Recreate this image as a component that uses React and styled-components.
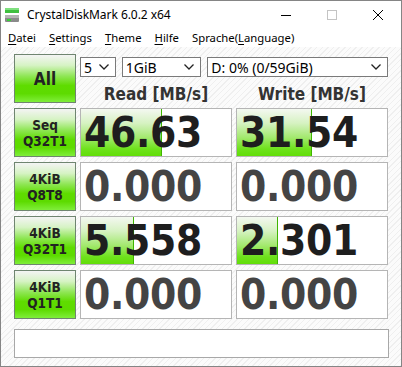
import React from 'react';
import styled, { createGlobalStyle } from 'styled-components';

const GlobalStyle = createGlobalStyle`
  html, body {
    margin: 0;
    padding: 0;
    background: #ffffff;
  }
`;

const Window = styled.div`
  box-sizing: border-box;
  width: 402px;
  height: 367px;
  border: 1px solid #858585;
  display: flex;
  flex-direction: column;
  background: #ffffff;
  font-family: 'Noto Sans', 'DejaVu Sans', sans-serif;
`;

const TitleBar = styled.div`
  height: 27px;
  display: flex;
  align-items: center;
  padding-left: 3px;
  background: #ffffff;
`;

const AppIcon = styled.svg`
  width: 16px;
  height: 16px;
  margin-right: 7px;
  flex-shrink: 0;
`;

const Title = styled.div`
  font-size: 12px;
  color: #000;
  flex: 1;
  letter-spacing: -0.05px;
`;

const WinButton = styled.div`
  width: 46px;
  height: 27px;
  display: flex;
  align-items: center;
  justify-content: center;
`;

const MenuBar = styled.div`
  height: 19px;
  display: flex;
  align-items: center;
  padding-left: 7px;
  gap: 13px;
  background: #ffffff;
  font-size: 11.3px;
  color: #000;
`;

const MenuItem = styled.span`
  u {
    text-decoration: underline;
    text-underline-offset: 2px;
  }
`;

const Client = styled.div`
  flex: 1;
  padding: 7px 12px 0 13px;
  background-color: #fbfbfb;
  background-image: repeating-linear-gradient(
    135deg,
    #fbfbfb 0px,
    #fbfbfb 3px,
    #efefef 3px,
    #efefef 4px
  );
`;

const Grid = styled.div`
  display: grid;
  grid-template-columns: 62px 152px 152px;
  grid-template-rows: 49px 49px 49px 49px 49px;
  column-gap: 4px;
  row-gap: 5px;
`;

const TestButton = styled.div`
  box-sizing: border-box;
  border: 1px solid #6f8570;
  background: linear-gradient(
    #f4f4f4 0%,
    #d6f3c4 22%,
    #8fe655 45%,
    #5fdc00 65%,
    #5ddb00 82%,
    #7fee3a 100%
  );
  display: flex;
  flex-direction: column;
  align-items: center;
  justify-content: center;
  font-family: 'DejaVu Sans Condensed', 'DejaVu Sans', sans-serif;
  font-stretch: condensed;
  font-weight: bold;
  font-size: ${p => (p.$big ? '17px' : '13.5px')};
  line-height: ${p => (p.$big ? '20px' : '16px')};
  color: #222;
`;

const TopPanel = styled.div`
  grid-column: 2 / 4;
  display: flex;
  flex-direction: column;
`;

const SelectRow = styled.div`
  display: flex;
  gap: 6px;
  margin-top: 3px;
`;

const Select = styled.div`
  box-sizing: border-box;
  width: ${p => p.$w}px;
  height: 20px;
  border: 1px solid #7a7a7a;
  background: #fff;
  display: flex;
  align-items: center;
  justify-content: space-between;
  padding: 0 6px 0 3px;
  font-size: 14px;
  color: #000;
`;

const Chevron = () => (
  <svg width="10" height="6" viewBox="0 0 10 6">
    <path d="M0.5 0.5 L5 5 L9.5 0.5" fill="none" stroke="#222" strokeWidth="1.3" />
  </svg>
);

const Headers = styled.div`
  display: grid;
  grid-template-columns: 152px 152px;
  column-gap: 4px;
  margin-top: 8px;
`;

const Header = styled.div`
  text-align: center;
  font-family: 'DejaVu Sans Condensed', 'DejaVu Sans', sans-serif;
  font-stretch: condensed;
  font-weight: bold;
  font-size: 17px;
  line-height: 19px;
  color: #333;
`;

const ValueBox = styled.div`
  position: relative;
  box-sizing: border-box;
  border: 1px solid #b5b5b5;
  background: #fff;
  overflow: hidden;
`;

const Meter = styled.div`
  position: absolute;
  left: 0;
  top: 0;
  bottom: 0;
  border-right: 1px solid #3fb500;
  background: linear-gradient(
    #f4f8f1 0%,
    #d6f2c2 30%,
    #a4e970 60%,
    #6ee21c 85%,
    #62de08 100%
  );
`;

const Value = styled.div`
  position: relative;
  padding-left: 3px;
  font-family: 'DejaVu Sans Condensed', 'DejaVu Sans', sans-serif;
  font-stretch: condensed;
  font-weight: bold;
  font-size: 42px;
  line-height: 47px;
  color: ${p => (p.$zero ? '#444' : '#1e1e1e')};
  letter-spacing: -0.3px;
`;

const Comment = styled.div`
  box-sizing: border-box;
  margin-top: 10px;
  width: 375px;
  height: 29px;
  border: 1px solid #a8a8a8;
  background: #fff;
`;

const rows = [
  { label: ['Seq', 'Q32T1'], read: '46.63', readBar: 80, write: '31.54', writeBar: 74 },
  { label: ['4KiB', 'Q8T8'], read: '0.000', readBar: 0, write: '0.000', writeBar: 0 },
  { label: ['4KiB', 'Q32T1'], read: '5.558', readBar: 52, write: '2.301', writeBar: 40 },
  { label: ['4KiB', 'Q1T1'], read: '0.000', readBar: 0, write: '0.000', writeBar: 0 },
];

const Cell = ({ value, bar }) => (
  <ValueBox>
    {bar > 0 && <Meter style={{ width: bar }} />}
    <Value $zero={value === '0.000'}>{value}</Value>
  </ValueBox>
);

export default function App() {
  return (
    <>
      <GlobalStyle />
      <Window>
        <TitleBar>
          <AppIcon viewBox="0 0 16 16">
            <rect x="1" y="1" width="14" height="5" fill="#3fbf3f" />
            <rect x="1" y="1" width="14" height="2" fill="#7fe07f" />
            <rect x="1" y="8" width="14" height="7" rx="1" fill="#8a8a8a" />
            <rect x="1" y="8" width="14" height="3" fill="#b5b5b5" />
            <rect x="3" y="12" width="4" height="2" fill="#36d136" />
          </AppIcon>
          <Title>CrystalDiskMark 6.0.2 x64</Title>
          <WinButton>
            <svg width="10" height="10" viewBox="0 0 10 10">
              <path d="M0 5.5 H10" stroke="#000" strokeWidth="1" />
            </svg>
          </WinButton>
          <WinButton>
            <svg width="10" height="10" viewBox="0 0 10 10">
              <rect x="0.5" y="0.5" width="9" height="9" fill="none" stroke="#c4c4c4" />
            </svg>
          </WinButton>
          <WinButton>
            <svg width="10" height="10" viewBox="0 0 10 10">
              <path d="M0 0 L10 10 M10 0 L0 10" stroke="#000" strokeWidth="1" />
            </svg>
          </WinButton>
        </TitleBar>
        <MenuBar>
          <MenuItem><u>D</u>atei</MenuItem>
          <MenuItem><u>S</u>ettings</MenuItem>
          <MenuItem><u>T</u>heme</MenuItem>
          <MenuItem><u>H</u>ilfe</MenuItem>
          <MenuItem>Sprache(<u>L</u>anguage)</MenuItem>
        </MenuBar>
        <Client>
          <Grid>
            <TestButton $big>All</TestButton>
            <TopPanel>
              <SelectRow>
                <Select $w={36}>5<Chevron /></Select>
                <Select $w={80}>1GiB<Chevron /></Select>
                <Select $w={182}>D: 0% (0/59GiB)<Chevron /></Select>
              </SelectRow>
              <Headers>
                <Header>Read [MB/s]</Header>
                <Header>Write [MB/s]</Header>
              </Headers>
            </TopPanel>
            {rows.map(r => (
              <React.Fragment key={r.label.join('')}>
                <TestButton>
                  <span>{r.label[0]}</span>
                  <span>{r.label[1]}</span>
                </TestButton>
                <Cell value={r.read} bar={r.readBar} />
                <Cell value={r.write} bar={r.writeBar} />
              </React.Fragment>
            ))}
          </Grid>
          <Comment />
        </Client>
      </Window>
    </>
  );
}
